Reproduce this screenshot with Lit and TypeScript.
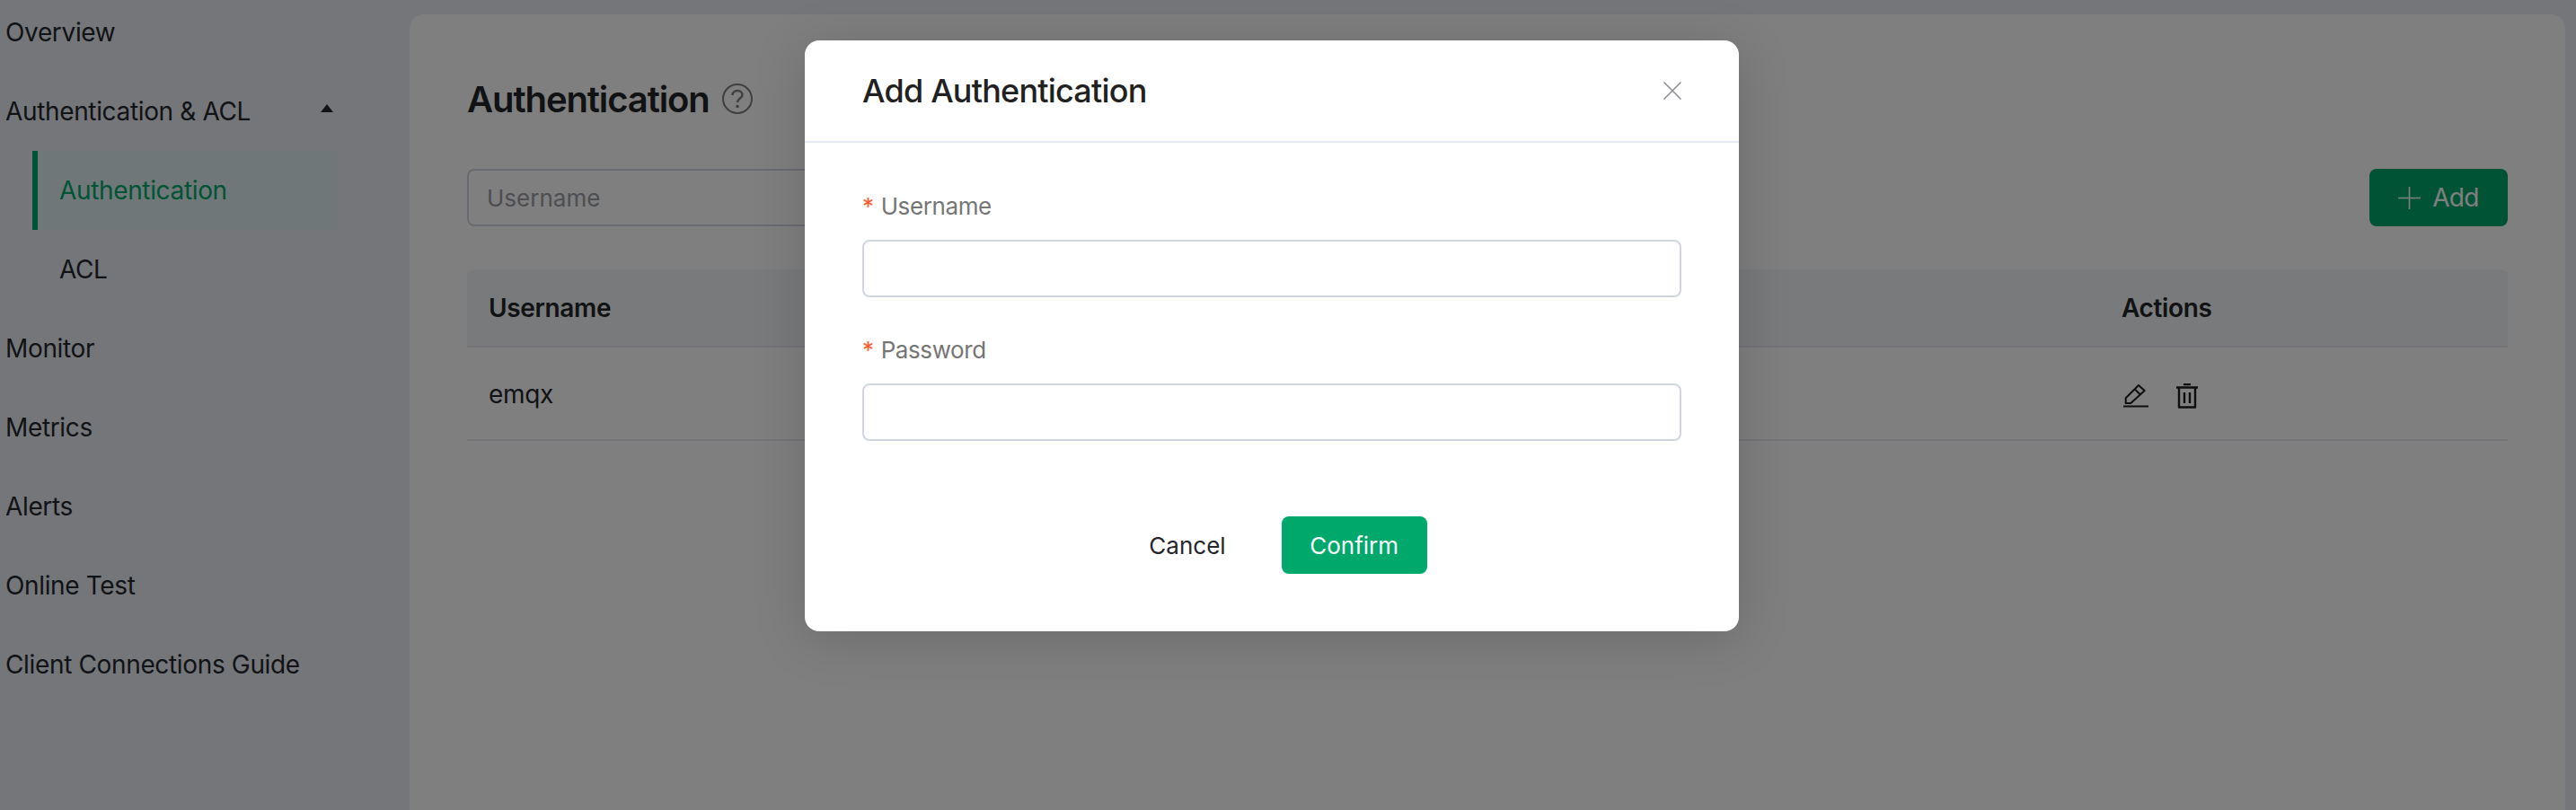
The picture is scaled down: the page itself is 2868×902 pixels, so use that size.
import { LitElement, html, css } from "lit";
import { customElement } from "lit/decorators.js";

const NAV_TOP = ["Overview"];
const NAV_BOTTOM = ["Monitor", "Metrics", "Alerts", "Online Test", "Client Connections Guide"];

@customElement("app-root")
export class AppRoot extends LitElement {
  static styles = css`
    :host {
      display: block;
      position: relative;
      height: 902px;
      overflow: hidden;
      background: #e8edf5;
      color: #25272c;
      font-family: Inter, "Noto Sans", sans-serif;
      font-size: 28px;
      letter-spacing: -0.35px;
    }

    .layout {
      display: flex;
      height: 100%;
    }

    .sidebar {
      flex: 0 0 456px;
      margin-top: -8px;
    }

    .nav-item {
      display: flex;
      align-items: center;
      justify-content: space-between;
      height: 88px;
      padding-left: 6px;
      padding-right: 85px;
    }

    .caret {
      width: 0;
      height: 0;
      border-left: 7px solid transparent;
      border-right: 7px solid transparent;
      border-bottom: 9px solid #25272c;
      margin-top: -7px;
    }

    .sub {
      display: flex;
      align-items: center;
      height: 88px;
      margin-left: 36px;
      width: 340px;
      box-sizing: border-box;
      padding-left: 30px;
    }

    .sub.active {
      padding-left: 24px;
      border-left: 6px solid #00a86b;
      background: #dfeff0;
      color: #00a86b;
    }

    .main {
      flex: 1;
      margin: 16px 12px 0 0;
      padding: 64px 64px 0;
      background: #fff;
      border-radius: 16px 16px 0 0;
    }

    .title {
      display: flex;
      align-items: center;
      gap: 13px;
      height: 60px;
      font-size: 40px;
      font-weight: 600;
      letter-spacing: -1.1px;
      color: #222428;
    }

    .help {
      width: 36px;
      height: 36px;
      color: #7c7e82;
    }

    .toolbar {
      display: flex;
      justify-content: space-between;
      margin-top: 48px;
    }

    .search {
      width: 560px;
      height: 64px;
      box-sizing: border-box;
      padding-left: 20px;
      display: flex;
      align-items: center;
      border: 2px solid #d1d5e3;
      border-radius: 8px;
      color: #999ca3;
      font-size: 26px;
      letter-spacing: 0;
    }

    .add {
      display: flex;
      align-items: center;
      justify-content: center;
      gap: 13px;
      width: 154px;
      height: 64px;
      background: #00a86b;
      border-radius: 8px;
      color: #fff;
      letter-spacing: -0.7px;
    }

    .add svg {
      width: 25px;
      height: 25px;
    }

    .table {
      margin-top: 48px;
    }

    .row {
      display: grid;
      grid-template-columns: 1fr 430px;
      align-items: center;
      padding-left: 24px;
    }

    .head {
      height: 87px;
      background: #f2f4f8;
      border-radius: 8px 8px 0 0;
      border-bottom: 2px solid #e6e8ef;
      box-sizing: border-box;
      font-weight: 600;
      color: #222428;
    }

    .body-row {
      height: 104px;
      padding-top: 2px;
      box-sizing: border-box;
      border-bottom: 2px solid #e6e8ef;
    }

    .actions {
      display: flex;
      align-items: center;
      gap: 31px;
      margin-top: 4px;
      padding-left: 2px;
    }

    .actions svg {
      display: block;
    }

    .mask {
      position: absolute;
      inset: 0;
      padding-right: 36px;
      background: rgba(0, 0, 0, 0.5);
      display: flex;
      justify-content: center;
      align-items: flex-start;
    }

    .dialog {
      width: 1040px;
      height: 658px;
      margin-top: 45px;
      background: #fff;
      border-radius: 16px;
      box-shadow: 0 8px 60px rgba(0, 0, 0, 0.16);
    }

    .dialog-head {
      display: flex;
      align-items: center;
      justify-content: space-between;
      height: 114px;
      box-sizing: border-box;
      padding: 0 64px;
      border-bottom: 2px solid #e6ebf5;
      font-size: 36px;
      font-weight: 500;
      letter-spacing: -0.8px;
      color: #212121;
    }

    .close {
      width: 20px;
      height: 20px;
      color: #8a8c92;
    }

    .form {
      padding: 51px 64px 0;
    }

    .field + .field {
      margin-top: 39px;
    }

    .label {
      font-size: 26px;
      line-height: 40px;
      letter-spacing: -0.4px;
      color: #757575;
      margin-bottom: 17px;
    }

    .req {
      color: #ff5a2c;
      margin-right: 8px;
    }

    .input {
      height: 64px;
      box-sizing: border-box;
      border: 2px solid #d1d5e3;
      border-radius: 8px;
    }

    .footer {
      display: flex;
      justify-content: center;
      align-items: center;
      gap: 62px;
      margin-top: 84px;
      padding-left: 36px;
      font-size: 26px;
      letter-spacing: 0;
    }

    .cancel {
      color: #24262c;
    }

    .confirm {
      display: flex;
      align-items: center;
      justify-content: center;
      width: 162px;
      height: 64px;
      border-radius: 8px;
      background: #00a86b;
      color: #fff;
    }
  `;

  render() {
    return html`
      <div class="layout">
        <nav class="sidebar">
          ${NAV_TOP.map((n) => html`<div class="nav-item">${n}</div>`)}
          <div class="nav-item">Authentication &amp; ACL <span class="caret"></span></div>
          <div class="sub active">Authentication</div>
          <div class="sub">ACL</div>
          ${NAV_BOTTOM.map((n) => html`<div class="nav-item">${n}</div>`)}
        </nav>
        <main class="main">
          <div class="title">
            Authentication
            <svg class="help" viewBox="0 0 36 36" fill="none" stroke="currentColor" stroke-width="2">
              <circle cx="18" cy="18" r="16"></circle>
              <path d="M12.500 14c0-3 2.400-5 5.500-5s5.500 2 5.500 4.700c0 3.800-5.500 4-5.500 8.300" stroke-width="2.500"></path>
              <circle cx="18" cy="26.500" r="1.800" fill="currentColor" stroke="none"></circle>
            </svg>
          </div>
          <div class="toolbar">
            <div class="search">Username</div>
            <div class="add">
              <svg viewBox="0 0 25 25" fill="none" stroke="currentColor" stroke-width="1.600">
                <path d="M12.500 0v25M0 12.500h25"></path>
              </svg>
              Add
            </div>
          </div>
          <div class="table">
            <div class="row head"><span>Username</span><span>Actions</span></div>
            <div class="row body-row">
              <span>emqx</span>
              <span class="actions">
                <svg width="28" height="28" viewBox="0 0 28 28" fill="none" stroke="#1c1d20" stroke-width="2">
                  <path d="M2.700 22v-5.700L17 2l6.700 6L8.300 22z" stroke-linejoin="round"></path>
                  <path d="M12.700 6.300l6 6"></path>
                  <path d="M0 25.500h28"></path>
                </svg>
                <svg width="24" height="28" viewBox="0 0 24 28" fill="none" stroke="#1c1d20" stroke-width="2.400">
                  <path d="M0 4.500h24M8 1h8"></path>
                  <path d="M3 4.500V26.500h18V4.500" stroke-linejoin="round"></path>
                  <path d="M9 10v12M15 10v12"></path>
                </svg>
              </span>
            </div>
          </div>
        </main>
      </div>
      <div class="mask">
        <section class="dialog">
          <header class="dialog-head">
            Add Authentication
            <svg class="close" viewBox="0 0 20 20" fill="none" stroke="currentColor" stroke-width="1.500">
              <path d="M.5.5l19 19M19.500.5l-19 19"></path>
            </svg>
          </header>
          <div class="form">
            <div class="field">
              <div class="label"><span class="req">*</span>Username</div>
              <div class="input"></div>
            </div>
            <div class="field">
              <div class="label"><span class="req">*</span>Password</div>
              <div class="input"></div>
            </div>
          </div>
          <div class="footer">
            <span class="cancel">Cancel</span>
            <span class="confirm">Confirm</span>
          </div>
        </section>
      </div>
    `;
  }
}
